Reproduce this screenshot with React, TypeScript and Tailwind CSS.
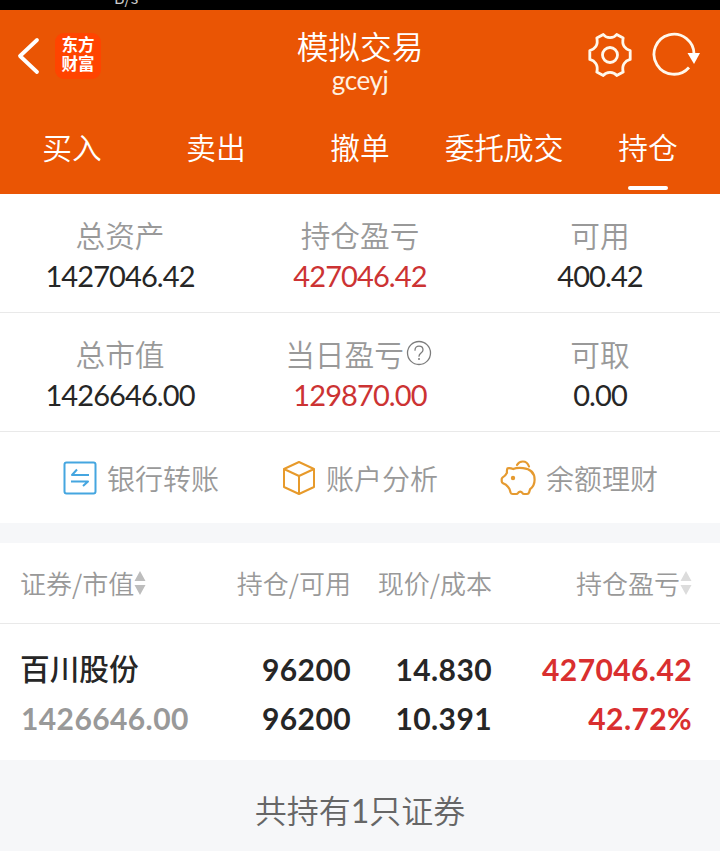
import type { ReactNode } from "react";

const CJK = "font-['Noto_Sans_CJK_SC',sans-serif]";
const NUM = "font-['Lato','Noto_Sans_CJK_SC',sans-serif]";

function BackIcon() {
  return (
    <svg width="24" height="38" viewBox="0 0 24 38" fill="none" stroke="#fff" strokeWidth="3.8" strokeLinecap="round" strokeLinejoin="round">
      <path d="M21 3L4 19l17 16" />
    </svg>
  );
}

function GearIcon() {
  return (
    <svg width="46" height="46" viewBox="0 0 46 46" fill="none" stroke="#fff8ec" strokeWidth="2.8" strokeLinejoin="round">
      <path d="M16.300 2.500C18 4.800 20.200 5.600 23 5.600s5-.8 6.700-3.100L36.200 6c-1 4-.3 6.600 1 8.600s3 3.200 6 4v8.800c-3 .8-4.700 2-6 4s-2 4.600-1 8.600l-6.500 3.500C28 41.200 25.800 40.400 23 40.400s-5 .8-6.700 3.100L9.800 40c1-4 .3-6.600-1-8.600s-3-3.200-6-4v-8.800c3-.8 4.700-2 6-4s2-4.600 1-8.600z" />
      <circle cx="23" cy="23" r="7.500" />
    </svg>
  );
}

function RefreshIcon() {
  return (
    <svg width="48" height="46" viewBox="0 0 48 46" fill="none" stroke="#fff8ec" strokeWidth="2.8">
      <path d="M37 35.500A20 20 0 1 1 42 23" />
      <path d="M35.500 21h12.500l-6 11z" fill="#fff" stroke="none" />
    </svg>
  );
}

function TransferIcon() {
  return (
    <svg width="34" height="34" viewBox="0 0 34 34" fill="none" stroke="#45a6e0" strokeWidth="2" strokeLinejoin="round">
      <rect x="1.500" y="1.500" width="31" height="31" rx="2" />
      <path d="M26 14H9l5-5.500M8 20.500h17l-5 4.500" />
    </svg>
  );
}

function BoxIcon() {
  return (
    <svg width="34" height="36" viewBox="0 0 34 36" fill="none" stroke="#e79a2b" strokeWidth="2" strokeLinejoin="round">
      <path d="M17 2l15 7v18l-15 7-15-7V9zM2 9l15 7 15-7M17 16v18" />
    </svg>
  );
}

function PiggyIcon() {
  return (
    <svg width="36" height="36" viewBox="0 0 36 36" fill="none" stroke="#e59a30" strokeWidth="2.200" strokeLinecap="round" strokeLinejoin="round">
      <path d="M7.500 8.300c2-.3 4 0 5.700.8 2.600-1.200 6-1.400 9.800-1 7.200.8 11.600 5 11.600 11.600 0 4-1.700 7.300-4.500 9.500l-1 3.200c-.3 1-1 1.600-2 1.600h-3c-1.100 0-1.500-.6-2-1.400-.8-1.400-3-1.400-3.800 0-.5.800-1 1.400-2 1.400h-3.600c-1.200 0-1.800-.6-2.200-1.700l-1-3.300c-1-1.700-2.100-3-3.500-4.200l-3-1.500c-1-.5-1.300-1.100-1.300-2v-2.200c0-.8.300-1.200 1-1.700 2.300-1.300 3.300-2.600 4.300-4.600-.2-1.500-.2-3 .5-4.500z" />
      <path d="M17 5C18.300 2.700 20.300 1.500 22.800 1.500c3 0 5.200 2 6.200 5" />
      <circle cx="13" cy="18" r="2.200" fill="#e59a30" stroke="none" />
    </svg>
  );
}

function HelpIcon() {
  return (
    <svg width="26" height="26" viewBox="0 0 26 26" fill="none" stroke="#7c7c7c" strokeWidth="1.300" strokeLinecap="round">
      <circle cx="13" cy="13" r="11.500" />
      <path d="M9 10.200c0-2.500 1.700-4 4-4s4 1.500 4 3.700c0 3-4 3.300-4 6.300" />
      <circle cx="13" cy="19" r="1" fill="#7c7c7c" stroke="none" />
    </svg>
  );
}

function SortIcon({ color }: { color: string }) {
  return (
    <svg width="12" height="24" viewBox="0 0 12 24" fill={color}>
      <path d="M6 0l5.500 10H.5zM6 24l5.500-10H.5z" />
    </svg>
  );
}

function Stat({ label, value, red, help }: { label: string; value: string; red?: boolean; help?: boolean }) {
  return (
    <div className="flex flex-col items-center pt-[21px]">
      <div className="flex h-[41px] items-start text-[29.700px] font-[350] text-[#999]">
        <span className="leading-10">{label}</span>
        {help && <span className="-ml-px mr-[3px] mt-[6px] pl-[3px]"><HelpIcon /></span>}
      </div>
      <div className={`${NUM} h-10 text-[29px] leading-10 tracking-[-0.9px] ${red ? "text-[#cc3333]" : "text-[#262626]"}`}>{value}</div>
    </div>
  );
}

function Action({ icon, label }: { icon: ReactNode; label: string }) {
  return (
    <div className="flex items-center gap-[10px]">
      {icon}
      <span className="text-[28px] font-[350] leading-10 text-[#999]">{label}</span>
    </div>
  );
}

const tabs = ["买入", "卖出", "撤单", "委托成交", "持仓"];

export default function App() {
  return (
    <div className={`${CJK} h-[851px] w-[720px] overflow-hidden bg-white`}>
      <div className="h-[10px] overflow-hidden bg-black pl-[114px]">
        <div className="-mt-[12px] text-[16px] leading-[18px] text-[#ccc]">B/s</div>
      </div>
      <header className="h-[184px] bg-[#ea5504] text-white">
        <div className="flex h-[92px] items-center justify-between">
          <div className="flex w-[200px] items-center pl-4">
            <BackIcon />
            <div className="ml-[15px] flex h-[46px] w-[46px] flex-col items-center justify-center rounded-[9px] bg-[#ff4400] pb-1 text-[16.500px] font-bold leading-[19px]">
              <span>东方</span>
              <span>财富</span>
            </div>
          </div>
          <div className="flex flex-col items-center pt-[9px]">
            <div className="h-10 text-[31.700px] font-[350] leading-[40px]">模拟交易</div>
            <div className={`${NUM} h-8 text-[26px] leading-[31px] tracking-[-0.4px] text-[#fff0e0]`}>gceyj</div>
          </div>
          <div className="flex w-[200px] items-center justify-end gap-[19px] pb-0.5 pr-5">
            <GearIcon />
            <RefreshIcon />
          </div>
        </div>
        <nav className="grid h-[92px] grid-cols-5">
          {tabs.map((t, i) => (
            <div key={t} className="flex flex-col items-center justify-between pb-1 pt-[21px]">
              <span className="whitespace-nowrap text-[29.700px] font-[350] leading-[48px]">{t}</span>
              {i === 4 && <span className="h-1 w-10 rounded-full bg-white" />}
            </div>
          ))}
        </nav>
      </header>
      <section className="grid h-[119px] grid-cols-3 border-b border-[#e9e9e9]">
        <Stat label="总资产" value="1427046.42" />
        <Stat label="持仓盈亏" value="427046.42" red />
        <Stat label="可用" value="400.42" />
      </section>
      <section className="grid h-[119px] grid-cols-3 border-b border-[#e9e9e9]">
        <Stat label="总市值" value="1426646.00" />
        <Stat label="当日盈亏" value="129870.00" red help />
        <Stat label="可取" value="0.00" />
      </section>
      <section className="grid h-[91px] grid-cols-[219px_218px_auto] items-center pl-[63px]">
        <Action icon={<TransferIcon />} label="银行转账" />
        <Action icon={<BoxIcon />} label="账户分析" />
        <Action icon={<PiggyIcon />} label="余额理财" />
      </section>
      <div className="h-5 bg-[#f6f7f9]" />
      <section className="grid h-[81px] grid-cols-[211px_140px_141px_200px] items-center border-b border-[#e9e9e9] text-[26px] font-[350] leading-10 text-[#999]">
        <div className="flex items-center pl-5">证券/市值<SortIcon color="#bdbdbd" /></div>
        <div className="text-right">持仓/可用</div>
        <div className="text-right">现价/成本</div>
        <div className="flex items-center justify-end">持仓盈亏<SortIcon color="#dcdcdc" /></div>
      </section>
      <section className={`${NUM} grid h-[136px] grid-cols-[211px_140px_141px_200px] grid-rows-[49px_49px] pt-[21px] text-[30px] font-bold leading-[48px] tracking-[0.4px] text-[#262626]`}>
        <div className={`${CJK} -mt-px pl-5 text-[29.700px] font-medium tracking-normal`}>百川股份</div>
        <div className="text-right">96200</div>
        <div className="text-right">14.830</div>
        <div className="text-right text-[#d92f2f]">427046.42</div>
        <div className="pl-[21px] tracking-[0.4px] text-[#999]">1426646.00</div>
        <div className="text-right">96200</div>
        <div className="text-right">10.391</div>
        <div className="text-right text-[#d92f2f]">42.72%</div>
      </section>
      <footer className="flex h-[91px] items-center justify-center bg-[#f6f7f9] pt-[9px] text-[32px] font-[350] text-[#666]">
        <span>共持有<span className={`${NUM} font-normal`}>1</span>只证券</span>
      </footer>
    </div>
  );
}
